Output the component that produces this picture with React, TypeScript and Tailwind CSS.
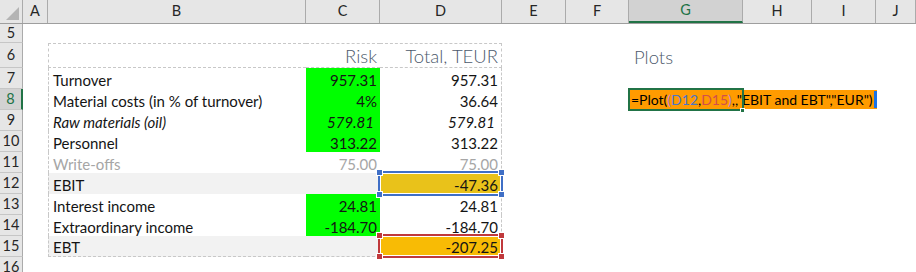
import { type ReactNode } from "react";

const COLS =
	"grid grid-cols-[23px_25px_258px_74px_122px_64px_63px_114px_69px_64px_1fr]";
const FONT = "font-['Lato','Liberation_Sans',sans-serif]";
const DASH = "border-dashed border-[#c8c8c8]";

type DataRow = {
	n: number;
	label: string;
	risk: string;
	total: string;
	green?: boolean;
	italic?: boolean;
	muted?: boolean;
	band?: boolean;
	ref?: "blue" | "red";
};

const ROWS: Array<DataRow> = [
	{ n: 7, label: "Turnover", risk: "957.31", total: "957.31", green: true },
	{
		n: 8,
		label: "Material costs (in % of turnover)",
		risk: "4%",
		total: "36.64",
		green: true,
	},
	{
		n: 9,
		label: "Raw materials (oil)",
		risk: "579.81",
		total: "579.81",
		green: true,
		italic: true,
	},
	{ n: 10, label: "Personnel", risk: "313.22", total: "313.22", green: true },
	{ n: 11, label: "Write-offs", risk: "75.00", total: "75.00", muted: true },
	{ n: 12, label: "EBIT", risk: "", total: "-47.36", band: true, ref: "blue" },
	{
		n: 13,
		label: "Interest income",
		risk: "24.81",
		total: "24.81",
		green: true,
	},
	{
		n: 14,
		label: "Extraordinary income",
		risk: "-184.70",
		total: "-184.70",
		green: true,
	},
	{ n: 15, label: "EBT", risk: "", total: "-207.25", band: true, ref: "red" },
];

const COLUMN_LETTERS = ["A", "B", "C", "D", "E", "F", "G", "H", "I", "J"];

function RowHeader({ n, active }: { n: number; active?: boolean }) {
	return (
		<div
			className={
				active
					? "flex items-center justify-center border-b border-r-2 border-b-[#c6c6c6] border-r-[#217346] bg-[#d2d2d2] text-[14.5px] text-[#217346]"
					: "flex items-center justify-center border-b border-r border-b-[#c6c6c6] border-r-[#ababab] bg-[#e6e6e6] text-[14.5px] text-[#262626]"
			}
		>
			{n}
		</div>
	);
}

function Corner({ color }: { color: "blue" | "red" }) {
	const tone = color === "blue" ? "bg-[#3f6fc6]" : "bg-[#c0393c]";
	return (
		<>
			<span
				className={`absolute -left-[4px] -top-[4px] h-[7px] w-[7px] border border-white ${tone}`}
			/>
			<span
				className={`absolute -right-[4px] -top-[4px] h-[7px] w-[7px] border border-white ${tone}`}
			/>
			<span
				className={`absolute -bottom-[4px] -left-[4px] h-[7px] w-[7px] border border-white ${tone}`}
			/>
			<span
				className={`absolute -bottom-[4px] -right-[4px] h-[7px] w-[7px] border border-white ${tone}`}
			/>
		</>
	);
}

function RefBox({ color }: { color: "blue" | "red" }) {
	const border = color === "blue" ? "border-[#3f6fc6]" : "border-[#c0393c]";
	return (
		<div
			className={`pointer-events-none absolute -inset-[2px] z-10 border-2 ${border} shadow-[inset_0_0_0_1px_#fff]`}
		>
			<Corner color={color} />
		</div>
	);
}

function Formula() {
	return (
		<div className="absolute left-0 top-0 z-20 h-full">
			<div className="absolute left-0 top-[1px] flex h-[19px] items-center bg-[#ff9b00] pl-[2px] text-[14px] whitespace-nowrap text-black">
				<span>=Plot(</span>
				<span className="text-[#b07ad6]">(</span>
				<span className="text-[#4a74c9]">D12</span>
				<span>,</span>
				<span className="text-[#d0504d]">D15</span>
				<span className="text-[#b07ad6]">)</span>
				<span>,,"EBIT and EBT","EUR")</span>
				<span className="ml-[1px] h-[17px] w-[3px] bg-[#1a73e8]" />
			</div>
			<div className="absolute -left-[1px] -top-[1px] h-[23px] w-[116px] border-2 border-[#217346]" />
			<span className="absolute -bottom-[3px] left-[111px] h-[5px] w-[5px] border border-white bg-[#217346]" />
		</div>
	);
}

function Row({
	n,
	height,
	active,
	children,
}: {
	n: number;
	height: string;
	active?: boolean;
	children?: ReactNode;
}) {
	return (
		<div className={`${COLS} ${height}`}>
			<RowHeader n={n} active={active} />
			{children}
		</div>
	);
}

function TableRow({ row, last }: { row: DataRow; last: boolean }) {
	const text = row.muted ? "text-[#a6a6a6]" : "text-[#141414]";
	const style = row.italic ? "italic" : "";
	const band = row.band ? "bg-[#f2f2f2]" : "bg-white";
	const bottom = last ? `border-b ${DASH}` : "";
	const refFill = row.ref === "blue" ? "bg-[#e9c21a]" : "bg-[#f8bb05]";

	return (
		<Row n={row.n} height="h-[21px]" active={row.n === 8}>
			<div />
			<div
				className={`flex items-end border-l pb-[1px] pl-[4px] ${DASH} ${band} ${bottom} ${text} ${style}`}
			>
				{row.label}
			</div>
			<div
				className={`flex items-end justify-end pb-[1px] ${row.italic ? "pr-[6px]" : "pr-[3px]"} ${row.green ? "bg-[#00ff00]" : band} ${bottom} ${text} ${style}`}
			>
				{row.risk}
			</div>
			<div
				className={`relative flex items-end justify-end border-r pb-[1px] ${row.italic ? "pr-[6px]" : "pr-[3px]"} ${DASH} ${row.ref ? refFill : "bg-white"} ${bottom} ${text} ${style}`}
			>
				{row.ref && <RefBox color={row.ref} />}
				<span className="relative z-20">{row.total}</span>
			</div>
			<div />
			<div />
			<div className="relative">{row.n === 8 && <Formula />}</div>
			<div />
			<div />
			<div />
		</Row>
	);
}

export default function App() {
	return (
		<div
			className={`h-[272px] w-[916px] overflow-hidden bg-white text-[15px] leading-none ${FONT}`}
		>
			<div
				className={`${COLS} h-[24px] border-b border-[#9e9e9e] bg-[#e6e6e6] text-[14.5px]`}
			>
				<div className="relative border-r border-[#ababab]">
					<svg
						className="absolute bottom-[3px] right-[3px]"
						width="13"
						height="13"
						viewBox="0 0 13 13"
					>
						<path d="M13 0 L13 13 L0 13 Z" fill="#b4b4b4" />
					</svg>
				</div>
				{COLUMN_LETTERS.map((letter) =>
					letter === "G" ? (
						<div
							key={letter}
							className="flex items-center justify-center border-b-2 border-r border-b-[#217346] border-r-[#ababab] bg-[#d2d2d2] text-[#217346]"
						>
							{letter}
						</div>
					) : (
						<div
							key={letter}
							className="flex items-center justify-center border-r border-[#ababab] text-[#262626]"
						>
							{letter}
						</div>
					),
				)}
			</div>

			<Row n={5} height="h-[19px]" />

			<Row n={6} height="h-[25px]">
				<div />
				<div className={`border-y border-l ${DASH}`} />
				<div
					className={`flex items-end justify-end border-y pb-[2px] pr-[3px] text-[18.5px] font-light text-[#4d5a6c] ${DASH}`}
				>
					Risk
				</div>
				<div
					className={`flex items-end justify-end border-y border-r pb-[2px] pr-[3px] text-[18.5px] font-light text-[#4d5a6c] ${DASH}`}
				>
					Total, TEUR
				</div>
				<div />
				<div />
				<div className="flex items-end pb-[2px] pl-[5px] text-[18.5px] font-light text-[#4d5a6c]">
					Plots
				</div>
				<div />
				<div />
				<div />
			</Row>

			{ROWS.map((row, index) => (
				<TableRow key={row.n} row={row} last={index === ROWS.length - 1} />
			))}

			<Row n={16} height="h-[21px]" />
		</div>
	);
}
